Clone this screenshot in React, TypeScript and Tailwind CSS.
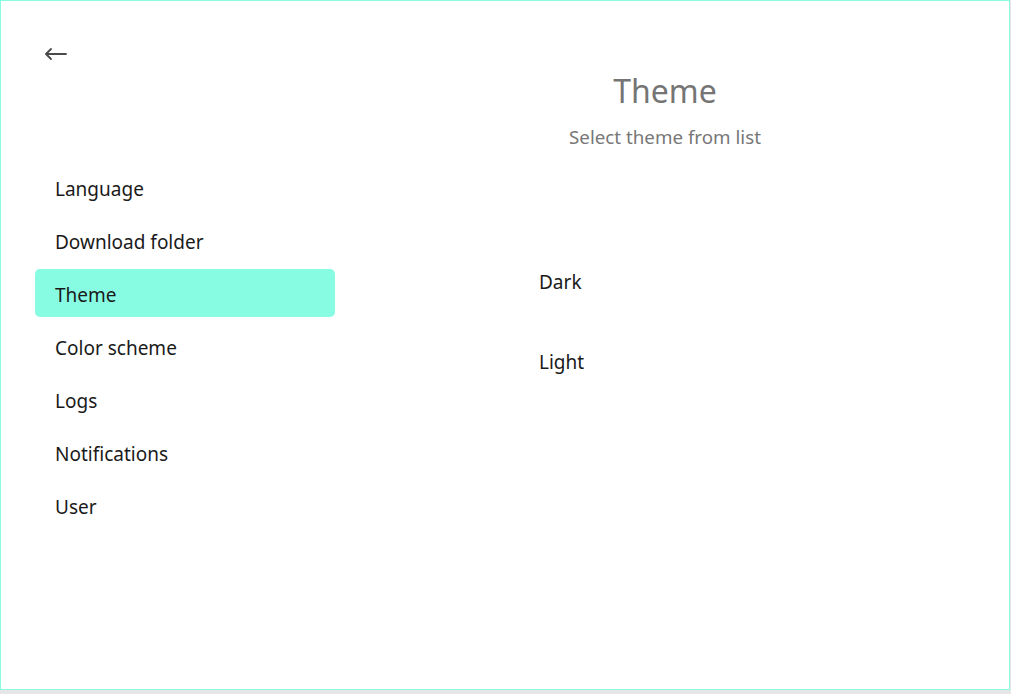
import { useState } from "react";

const sections = [
  "Language",
  "Download folder",
  "Theme",
  "Color scheme",
  "Logs",
  "Notifications",
  "User",
];

const themes = ["Dark", "Light"];

export default function App() {
  const [active, setActive] = useState("Theme");

  return (
    <div
      className="w-[1011px] h-[694px] bg-[#e6e6e6] overflow-hidden"
      style={{ fontFamily: '"Noto Sans", "Open Sans", sans-serif' }}
    >
      <div className="w-[1010px] h-[690px] bg-white border border-[#87fce3] flex">
        {/* Left - settings menu */}
        <div className="w-[334px] shrink-0 flex flex-col pl-[34px]">
          <button className="mt-[41px] ml-[9px] w-6 h-6 text-[#4a4a4a]">
            <svg viewBox="0 0 24 24" width="24" height="24" fill="none" stroke="currentColor" strokeWidth="1.8" strokeLinecap="round" strokeLinejoin="round">
              <path d="M22 12H2.5" />
              <path d="M7 7l-5 5 5 5" />
            </svg>
          </button>

          <nav className="mt-[97px] flex flex-col gap-[5px]">
            {sections.map((s) => (
              <div
                key={s}
                onClick={() => setActive(s)}
                className={`h-[48px] w-[300px] rounded-[5px] px-5 pt-1 flex items-center text-[19px] text-[#1a1a1a] cursor-pointer ${
                  active === s ? "bg-[#87fce3]" : ""
                }`}
              >
                {s}
              </div>
            ))}
          </nav>
        </div>

        {/* Right - theme picker */}
        <div className="w-[660px] shrink-0 flex flex-col">
          <div className="mt-[68px] flex flex-col items-center text-[#757575]">
            <h1 className="text-[32px] leading-[44px]">Theme</h1>
            <p className="mt-[10px] text-[18.75px] text-[#777]">Select theme from list</p>
          </div>

          <div className="mt-[117px] pl-[204px] flex flex-col gap-[52px]">
            {themes.map((t) => (
              <div key={t} className="text-[19px] leading-[28px] text-[#1a1a1a]">
                {t}
              </div>
            ))}
          </div>
        </div>
      </div>
    </div>
  );
}
